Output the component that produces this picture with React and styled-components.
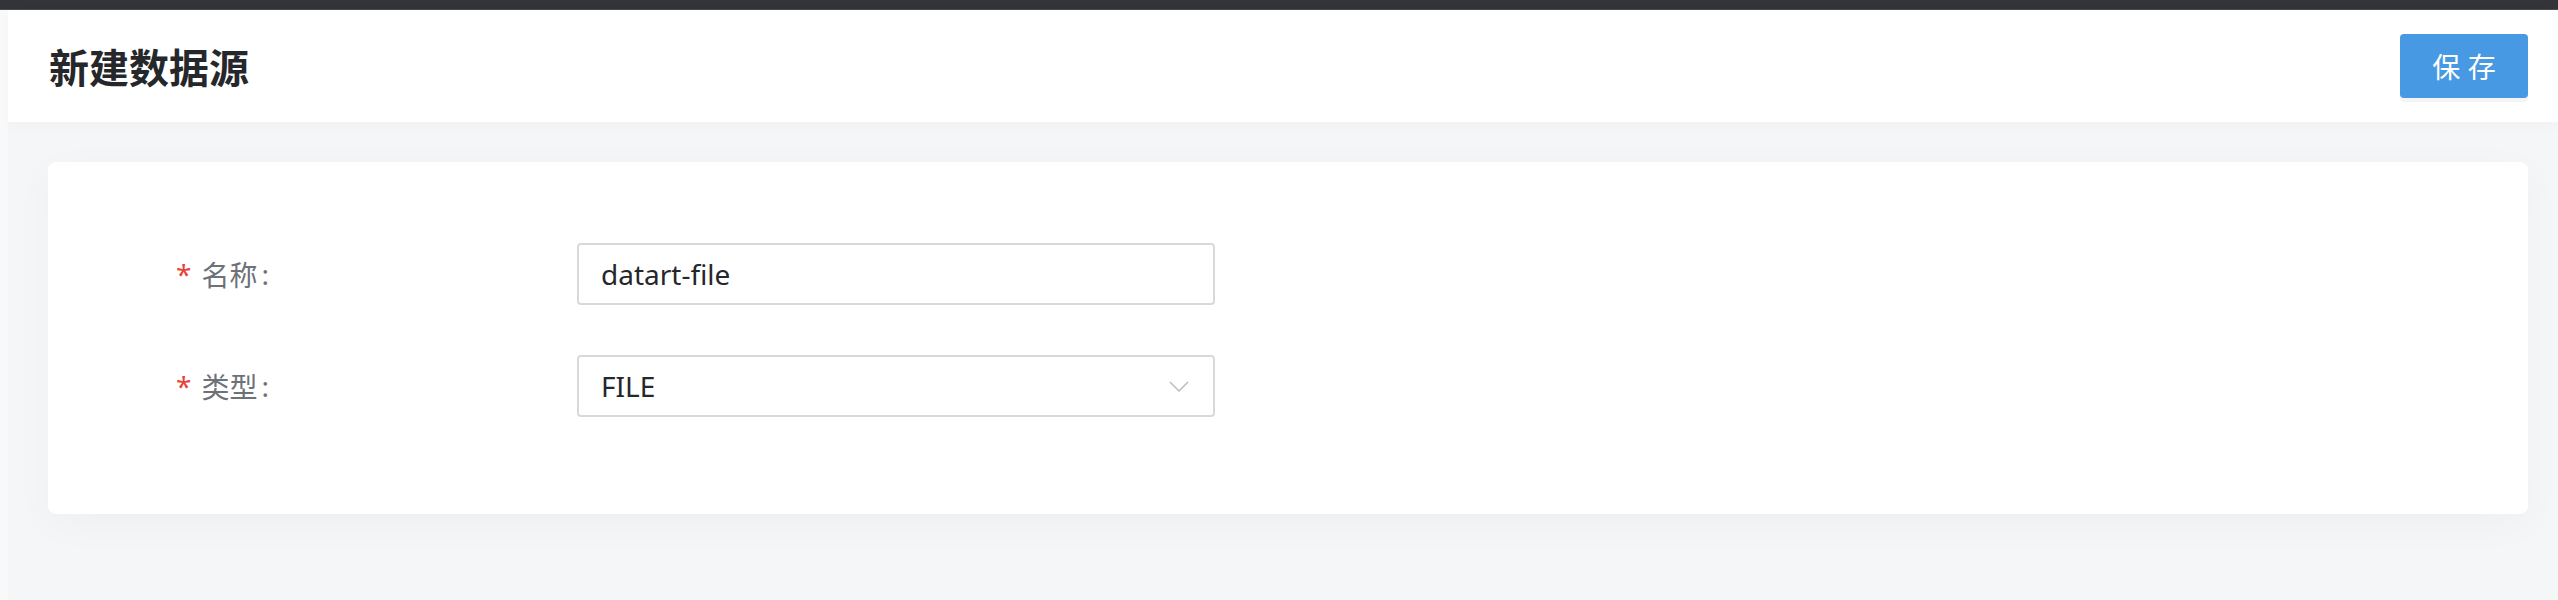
import React from "react";
import styled, { createGlobalStyle } from "styled-components";

const GlobalStyle = createGlobalStyle`
  html, body {
    margin:0;
    padding:0;
    background:#f9fafb;
  }
  body {
    font-family:"Noto Sans", "Noto Sans CJK SC", sans-serif;
  }
`;

const Page = styled.div`
  display:flex;
  flex-direction:column;
  height:600px;
  overflow:hidden;
`;

const TopBar = styled.div`
  flex-shrink:0;
  height:9px;
  background:#333438;
  border-bottom:1px solid #4b4c51;
`;

const Body = styled.div`
  flex:1;
  display:flex;
  min-height:0;
`;

const SideEdge = styled.div`
  flex-shrink:0;
  width:8px;
  background:#f9f9fa;
`;

const Main = styled.div`
  flex:1;
  display:flex;
  flex-direction:column;
  background:#f5f6f8;
`;

const Header = styled.header`
  position:relative;
  z-index:1;
  flex-shrink:0;
  height:112px;
  display:flex;
  align-items:center;
  justify-content:space-between;
  padding:0 30px 0 41px;
  background:#fff;
  box-shadow:0 4px 16px rgba(0, 0, 0, 0.025);
`;

const Title = styled.h1`
  margin:0;
  font-size:40px;
  font-weight:700;
  color:#26272b;
`;

const SaveButton = styled.button`
  width:128px;
  height:64px;
  border:none;
  border-radius:4px;
  background:#4799e3;
  color:#fff;
  font-family:"Noto Sans", "Noto Sans CJK SC", sans-serif;
  font-size:28px;
  box-shadow:0 4px 0 rgba(0, 0, 0, 0.045);
  cursor:pointer;
`;

const Content = styled.div`
  flex:1;
  padding:40px 30px 0 40px;
`;

const Card = styled.div`
  background:#fff;
  border-radius:8px;
  padding:81px 0 97px 128px;
  box-shadow:0 10px 40px rgba(0, 0, 0, 0.03);
`;

const Form = styled.form`
  display:grid;
  grid-template-columns:401px 638px;
  grid-auto-rows:62px;
  row-gap:50px;
  align-items:center;
`;

const Label = styled.label`
  display:flex;
  align-items:center;
  font-size:28px;
  color:#6d7178;
`;

const Required = styled.span`
  color:#e5443b;
  margin-right:10px;
  font-size:28px;
`;

const Colon = styled.span`
  margin:0 16px 0 4px;
`;

const Field = styled.div`
  box-sizing:border-box;
  height:62px;
  display:flex;
  align-items:center;
  justify-content:space-between;
  padding:0 24px 0 22px;
  border:2px solid #d9d9d9;
  border-radius:4px;
  font-size:28px;
  color:#26272b;
`;

const Chevron = () => (
  <svg width="20" height="11" viewBox="0 0 20 11" fill="none">
    <path d="M1 1 L10 10 L19 1" stroke="#bfbfbf" strokeWidth="1.6" />
  </svg>
);

const rows = [
  { label: "名称", value: "datart-file" },
  { label: "类型", value: "FILE", select: true },
];

export default function App() {
  return (
    <>
      <GlobalStyle />
      <Page>
        <TopBar />
        <Body>
          <SideEdge />
          <Main>
            <Header>
              <Title>新建数据源</Title>
              <SaveButton>保 存</SaveButton>
            </Header>
            <Content>
              <Card>
                <Form>
                  {rows.map((r) => (
                    <React.Fragment key={r.label}>
                      <Label>
                        <Required>*</Required>
                        {r.label}
                        <Colon>:</Colon>
                      </Label>
                      <Field>
                        <span>{r.value}</span>
                        {r.select && <Chevron />}
                      </Field>
                    </React.Fragment>
                  ))}
                </Form>
              </Card>
            </Content>
          </Main>
        </Body>
      </Page>
    </>
  );
}
